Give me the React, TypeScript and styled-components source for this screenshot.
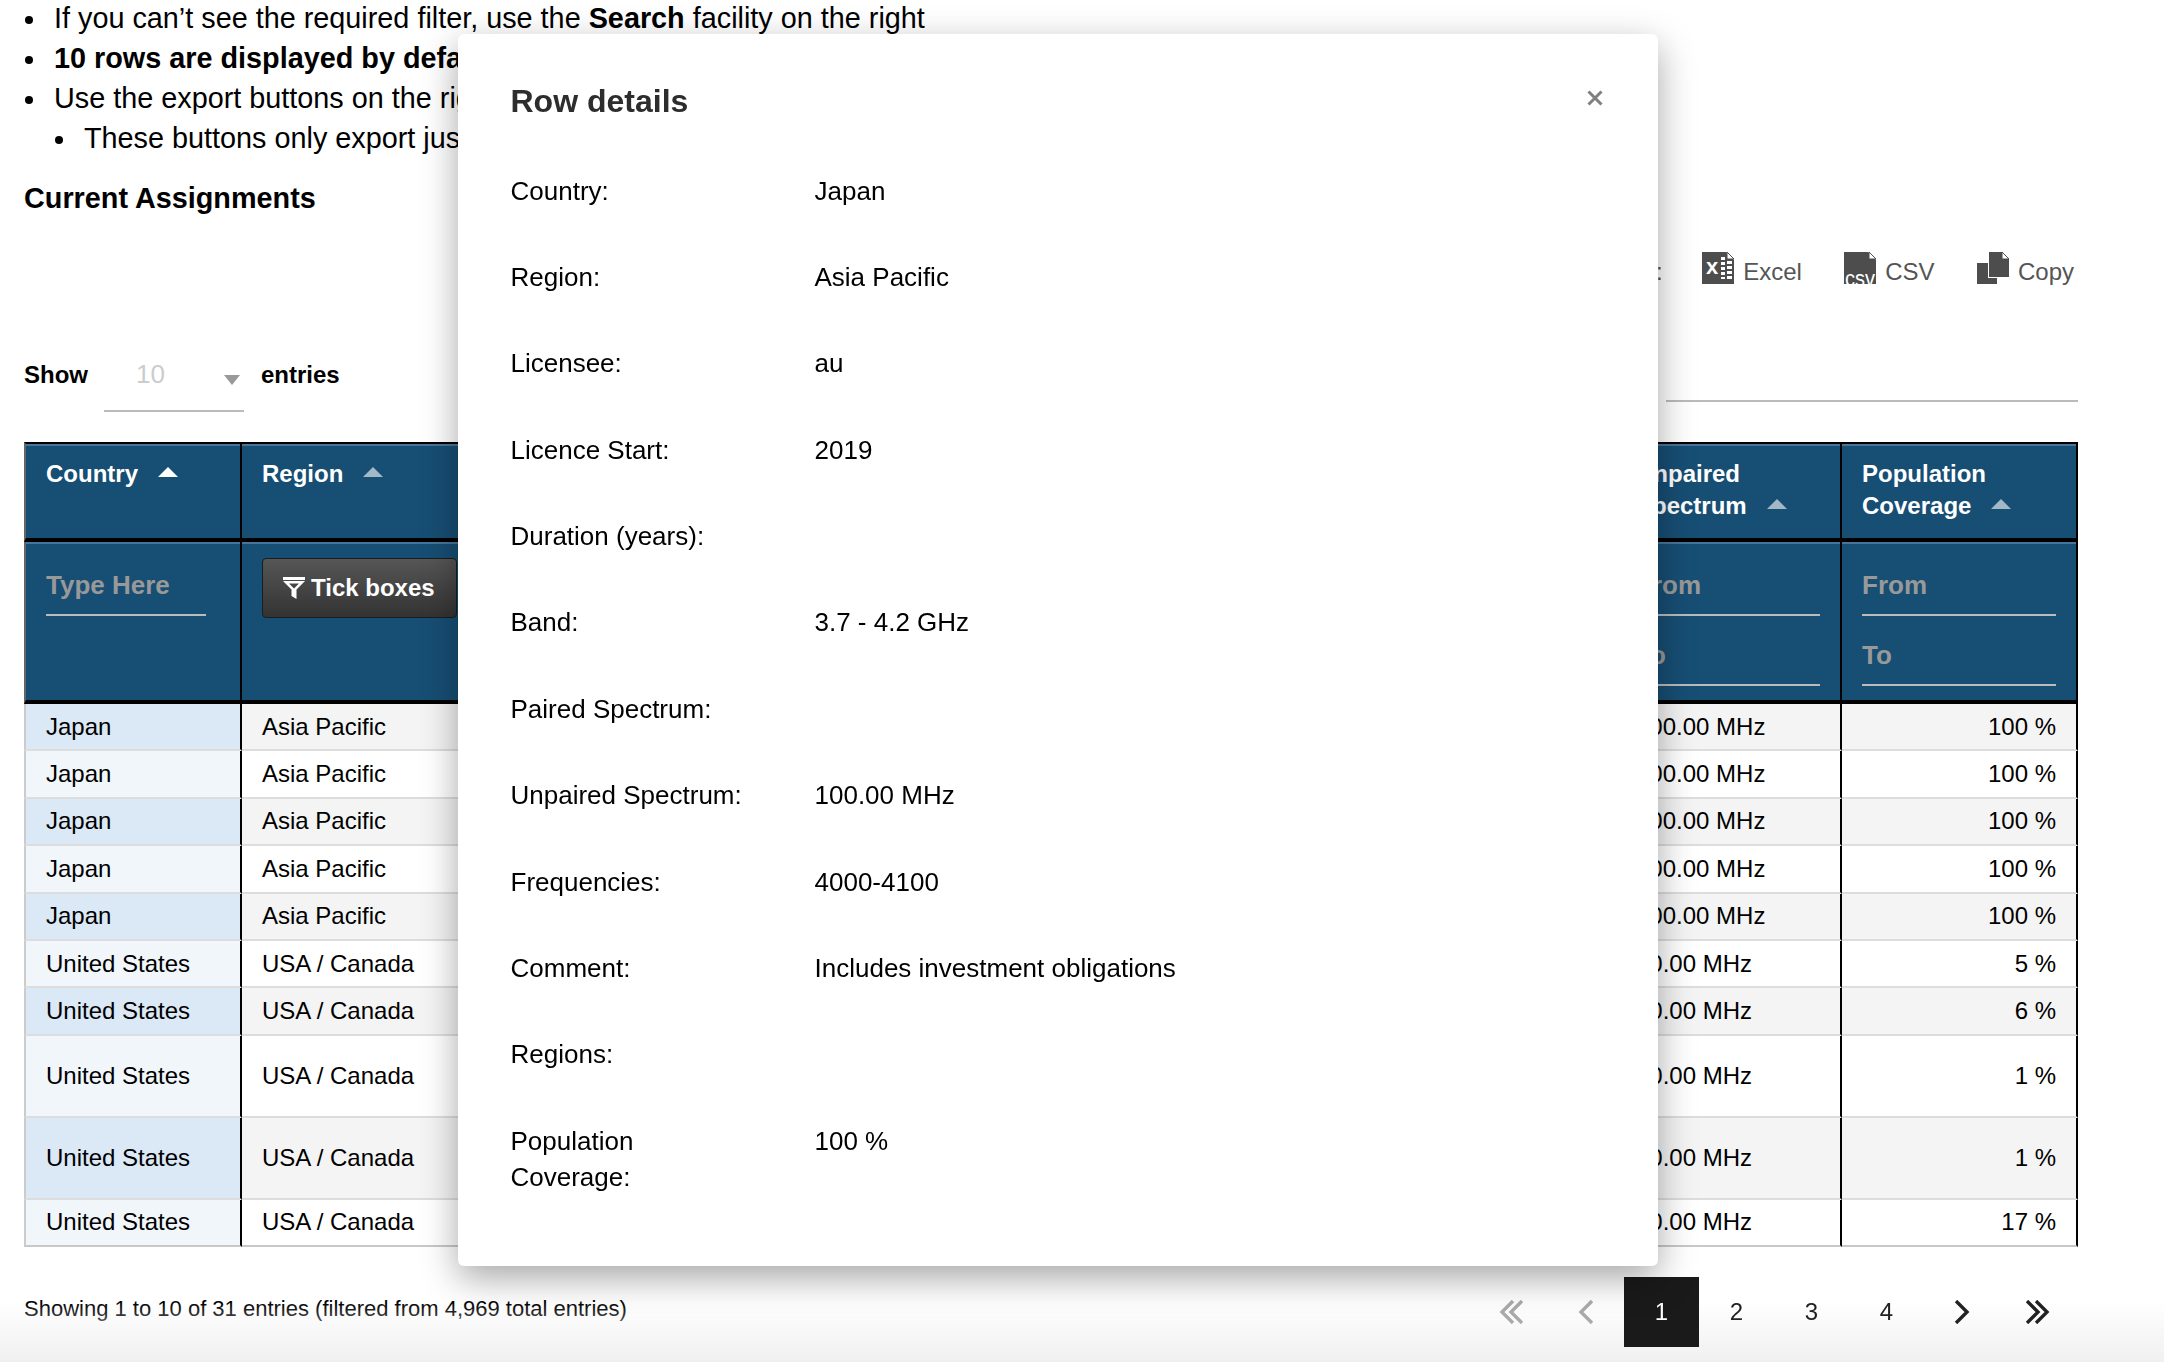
import React from "react";
import styled, { createGlobalStyle } from "styled-components";

const GlobalStyle = createGlobalStyle`
  * { box-sizing: border-box; }
  html, body {
    margin: 0;
    height: 1362px;
    overflow: hidden;
    background: #fff;
    color: #000;
    font-family: "Liberation Sans", Arial, sans-serif;
    font-size: 24px;
  }
`;

const rows = [
  { country: "Japan", region: "Asia Pacific", unpaired: "100.00 MHz", coverage: "100 %" },
  { country: "Japan", region: "Asia Pacific", unpaired: "100.00 MHz", coverage: "100 %" },
  { country: "Japan", region: "Asia Pacific", unpaired: "100.00 MHz", coverage: "100 %" },
  { country: "Japan", region: "Asia Pacific", unpaired: "100.00 MHz", coverage: "100 %" },
  { country: "Japan", region: "Asia Pacific", unpaired: "100.00 MHz", coverage: "100 %" },
  { country: "United States", region: "USA / Canada", unpaired: "10.00 MHz", coverage: "5 %" },
  { country: "United States", region: "USA / Canada", unpaired: "10.00 MHz", coverage: "6 %" },
  { country: "United States", region: "USA / Canada", unpaired: "10.00 MHz", coverage: "1 %", tall: true },
  { country: "United States", region: "USA / Canada", unpaired: "10.00 MHz", coverage: "1 %", tall: true },
  { country: "United States", region: "USA / Canada", unpaired: "10.00 MHz", coverage: "17 %" },
];

const hiddenColumns = ["Licensee", "Licence Start", "Duration (years)", "Band", "Paired Spectrum"];

const details = [
  ["Country:", "Japan"],
  ["Region:", "Asia Pacific"],
  ["Licensee:", "au"],
  ["Licence Start:", "2019"],
  ["Duration (years):", ""],
  ["Band:", "3.7 - 4.2 GHz"],
  ["Paired Spectrum:", ""],
  ["Unpaired Spectrum:", "100.00 MHz"],
  ["Frequencies:", "4000-4100"],
  ["Comment:", "Includes investment obligations"],
  ["Regions:", ""],
  ["Population Coverage:", "100 %"],
];

function ExcelIcon() {
  return (
    <svg width="32" height="32" viewBox="0 0 32 32">
      <path d="M0 0H24L32 8V32H0Z" fill="#4d4d4d" />
      <path d="M25 0L32 7H25Z" fill="#fff" stroke="#4d4d4d" strokeWidth="1" />
      <text x="4" y="22" fontSize="22" fontWeight="700" fill="#fff" fontFamily="Liberation Sans">x</text>
      <path d="M19 5h4v3h-4zM25 9h5v3h-5zM19 10h4v3h-4zM25 14h5v3h-5zM19 15h4v3h-4zM25 19h5v3h-5zM19 20h4v3h-4zM25 24h5v3h-5zM19 25h4v2h-4z" fill="#fff" />
    </svg>
  );
}

function CsvIcon() {
  return (
    <svg width="32" height="32" viewBox="0 0 32 32">
      <path d="M0 0H24L32 8V32H0Z" fill="#4d4d4d" />
      <path d="M25 0L32 7H25Z" fill="#fff" stroke="#4d4d4d" strokeWidth="1" />
      <text x="1" y="34" fontSize="22" fill="#fff" fontFamily="Liberation Sans" textLength="30" lengthAdjust="spacingAndGlyphs">csv</text>
    </svg>
  );
}

function CopyIcon() {
  return (
    <svg width="32" height="32" viewBox="0 0 32 32">
      <path d="M0 11H11V26H20V32H0Z" fill="#4d4d4d" />
      <path d="M12 0H25L32 7V25H12Z" fill="#4d4d4d" />
      <path d="M25 0L32 7H25Z" fill="#fff" stroke="#4d4d4d" strokeWidth="1" />
    </svg>
  );
}

function FunnelIcon() {
  return (
    <svg width="22" height="22" viewBox="0 0 22 22">
      <path d="M0 0H22V3H0Z" fill="#fff" />
      <path fillRule="evenodd" d="M0 4H22L13.5 12.5V22L8.5 19V12.5ZM6 6.5L11 11.5L16 6.5Z" fill="#fff" />
    </svg>
  );
}

function Chevrons({ count, dir, muted }: { count: number; dir: "left" | "right"; muted?: boolean }) {
  const points = dir === "left" ? "14,1 3,12 14,23" : "3,1 14,12 3,23";
  return (
    <svg width={count === 2 ? 26 : 17} height="24" viewBox={count === 2 ? "0 0 26 24" : "0 0 17 24"} fill="none">
      <polyline points={points} stroke={muted ? "#aaa" : "#222"} strokeWidth="3.4" />
      {count === 2 && (
        <polyline points={points} transform="translate(9 0)" stroke={muted ? "#aaa" : "#222"} strokeWidth="3.4" />
      )}
    </svg>
  );
}

export default function App() {
  return (
    <Page>
      <GlobalStyle />
      <Notes>
        <li>If you can’t see the required filter, use the <b>Search</b> facility on the right</li>
        <li><b>10 rows are displayed by default</b></li>
        <li>
          Use the export buttons on the right
          <ul>
            <li>These buttons only export just the rows shown</li>
          </ul>
        </li>
      </Notes>
      <SectionTitle>Current Assignments</SectionTitle>

      <ExportBar>
        <ExportLabel>Export:</ExportLabel>
        <ExportButton><ExcelIcon />Excel</ExportButton>
        <ExportButton><CsvIcon />CSV</ExportButton>
        <ExportButton><CopyIcon />Copy</ExportButton>
      </ExportBar>

      <TableControls>
        <LengthControl>
          Show
          <LengthSelect>
            10
            <SelectArrow />
          </LengthSelect>
          entries
        </LengthControl>
        <SearchBox />
      </TableControls>

      <Table>
        <colgroup>
          <col style={{ width: 218 }} />
          <col style={{ width: 304 }} />
          {hiddenColumns.map((name) => (
            <col key={name} style={{ width: 214 }} />
          ))}
          <col style={{ width: 226 }} />
          <col style={{ width: 236 }} />
        </colgroup>
        <thead>
          <tr>
            <HeadCell>Country<SortArrow $active /></HeadCell>
            <HeadCell>Region<SortArrow /></HeadCell>
            {hiddenColumns.map((name) => (
              <HeadCell key={name}>{name}<SortArrow /></HeadCell>
            ))}
            <HeadCell>Unpaired Spectrum<SortArrow /></HeadCell>
            <HeadCell>Population Coverage<SortArrow /></HeadCell>
          </tr>
          <tr>
            <FilterCell><FilterInput placeholder="Type Here" $narrow /></FilterCell>
            <FilterCell>
              <TickButton><FunnelIcon />Tick boxes</TickButton>
            </FilterCell>
            {hiddenColumns.map((name) => (
              <FilterCell key={name} />
            ))}
            <FilterCell>
              <FilterInput placeholder="From" />
              <FilterInput placeholder="To" />
            </FilterCell>
            <FilterCell>
              <FilterInput placeholder="From" />
              <FilterInput placeholder="To" />
            </FilterCell>
          </tr>
        </thead>
        <tbody>
          {rows.map((row, index) => (
            <BodyRow key={index} $tall={row.tall}>
              <CountryCell $odd={index % 2 === 0}>{row.country}</CountryCell>
              <BodyCell $odd={index % 2 === 0}>{row.region}</BodyCell>
              {hiddenColumns.map((name) => (
                <BodyCell key={name} $odd={index % 2 === 0} />
              ))}
              <BodyCell $odd={index % 2 === 0}>{row.unpaired}</BodyCell>
              <CoverageCell $odd={index % 2 === 0}>{row.coverage}</CoverageCell>
            </BodyRow>
          ))}
        </tbody>
      </Table>

      <TableFooter>
        <Info>Showing 1 to 10 of 31 entries (filtered from 4,969 total entries)</Info>
        <Pager>
          <PageCell><Chevrons count={2} dir="left" muted /></PageCell>
          <PageCell><Chevrons count={1} dir="left" muted /></PageCell>
          <PageCell $current>1</PageCell>
          <PageCell>2</PageCell>
          <PageCell>3</PageCell>
          <PageCell>4</PageCell>
          <PageCell><Chevrons count={1} dir="right" /></PageCell>
          <PageCell><Chevrons count={2} dir="right" /></PageCell>
        </Pager>
      </TableFooter>

      <BottomFade />

      <Modal>
        <ModalTitle>Row details</ModalTitle>
        <CloseButton>
          <svg width="16" height="16" viewBox="0 0 16 16">
            <path d="M1.5 1.5L14.5 14.5M14.5 1.5L1.5 14.5" stroke="#808080" strokeWidth="3" />
          </svg>
        </CloseButton>
        {details.map(([label, value]) => (
          <DetailRow key={label}>
            <span>{label}</span>
            <span>{value}</span>
          </DetailRow>
        ))}
      </Modal>
    </Page>
  );
}

const Page = styled.div`
  padding: 0 86px 0 24px;
  height: 1362px;
  overflow: hidden;
`;

const Notes = styled.ul`
  margin: -2px 0 0;
  padding: 0 0 0 30px;
  list-style: none;
  font-size: 28.8px;
  line-height: 40px;

  li {
    position: relative;
  }

  li::before {
    content: "";
    position: absolute;
    left: -29px;
    top: 18px;
    width: 8px;
    height: 8px;
    border-radius: 50%;
    background: #000;
  }

  ul {
    margin: 0;
    padding-left: 30px;
    list-style: none;
  }
`;

const SectionTitle = styled.div`
  margin-top: 20px;
  font-size: 28.8px;
  line-height: 40px;
  font-weight: 700;
`;

const ExportBar = styled.div`
  display: flex;
  justify-content: flex-end;
  align-items: flex-start;
  margin-top: 34px;
  padding-right: 4px;
  height: 32px;
  color: #555;
`;

const ExportLabel = styled.span`
  margin-right: -3px;
  line-height: 40px;
`;

const ExportButton = styled.span`
  display: flex;
  align-items: flex-start;
  gap: 9px;
  margin-left: 42.4px;
  line-height: 40px;
`;

const TableControls = styled.div`
  display: flex;
  justify-content: space-between;
  align-items: flex-start;
  margin-top: 66px;
  margin-bottom: 30px;
`;

const LengthControl = styled.div`
  display: flex;
  font-weight: 700;
  line-height: 50px;
`;

const LengthSelect = styled.div`
  position: relative;
  width: 140px;
  height: 62px;
  margin: 0 17px 0 16px;
  padding-left: 32px;
  border-bottom: 2px solid #bbb;
  color: #ccc;
  font-size: 26px;
  font-weight: 400;
  line-height: 48px;
`;

const SelectArrow = styled.span`
  position: absolute;
  right: 4px;
  top: 25px;
  border-left: 8px solid transparent;
  border-right: 8px solid transparent;
  border-top: 10px solid #999;
`;

const SearchBox = styled.div`
  width: 412px;
  height: 52px;
  border-bottom: 2px solid #bbb;
`;

const Table = styled.table`
  width: 2054px;
  table-layout: fixed;
  border-collapse: separate;
  border-spacing: 0;
`;

const HeadCell = styled.th`
  height: 100px;
  padding: 14px 20px 0;
  border-top: 2px solid #000;
  border-right: 2px solid #000;
  border-bottom: 4px solid #000;
  box-shadow: inset 0 2px 0 #47759a;
  background: #174e74;
  color: #fff;
  font-size: 24px;
  font-weight: 700;
  line-height: 32px;
  text-align: left;
  vertical-align: top;

  &:first-child {
    border-left: 2px solid #666;
  }
`;

const SortArrow = styled.span<{ $active?: boolean }>`
  display: inline-block;
  margin-left: 20px;
  vertical-align: 5px;
  border-left: 10px solid transparent;
  border-right: 10px solid transparent;
  border-bottom: 10px solid ${(p) => (p.$active ? "#fff" : "#a3b8c7")};
`;

const FilterCell = styled.th`
  height: 162px;
  padding: 16px 20px 0;
  border-right: 2px solid #000;
  border-bottom: 4px solid #000;
  box-shadow: inset 0 2px 0 #47759a;
  background: #174e74;
  vertical-align: top;

  &:first-child {
    border-left: 2px solid #666;
  }
`;

const FilterInput = styled.input<{ $narrow?: boolean }>`
  display: block;
  width: ${(p) => (p.$narrow ? "160px" : "100%")};
  height: 46px;
  margin-top: 12px;
  padding: 0 0 14px;
  border: 0;
  border-bottom: 2px solid #bbb;
  background: transparent;
  color: #fff;
  font-family: inherit;
  font-size: 26px;
  font-weight: 700;
  line-height: 30px;
  outline: none;

  & + & {
    margin-top: 24px;
  }

  &::placeholder {
    color: #999;
    opacity: 1;
  }
`;

const TickButton = styled.button`
  display: flex;
  align-items: center;
  gap: 6px;
  width: 195px;
  height: 60px;
  padding: 0 0 0 20px;
  border: 1px solid #1c1c1c;
  border-radius: 4px;
  background: linear-gradient(#565656, #333);
  color: #fff;
  font-family: inherit;
  font-size: 24px;
  font-weight: 700;
`;

const BodyRow = styled.tr<{ $tall?: boolean }>`
  height: ${(p) => (p.$tall ? "82px" : "47.4px")};
`;

const BodyCell = styled.td<{ $odd?: boolean }>`
  padding: 0 20px;
  border-right: 2px solid #000;
  border-bottom: 2px solid #ddd;
  background: ${(p) => (p.$odd ? "#f4f4f4" : "#fff")};
  white-space: nowrap;

  tr:last-child & {
    border-bottom-color: #c8c8c8;
  }
`;

const CountryCell = styled(BodyCell)`
  border-left: 2px solid #ccc;
  background: ${(p) => (p.$odd ? "#dbe8f5" : "#f1f6fb")};
`;

const CoverageCell = styled(BodyCell)`
  text-align: right;
`;

const TableFooter = styled.div`
  display: flex;
  justify-content: space-between;
  align-items: flex-start;
  margin-top: 30px;
`;

const Info = styled.div`
  padding-top: 14px;
  font-size: 22px;
  line-height: 36px;
`;

const Pager = styled.div`
  position: relative;
  z-index: 1;
  display: flex;
  margin-right: 4px;
`;

const PageCell = styled.div<{ $current?: boolean }>`
  display: flex;
  align-items: center;
  justify-content: center;
  width: 75px;
  height: 70px;
  background: ${(p) => (p.$current ? "#1a1a1a" : "transparent")};
  color: ${(p) => (p.$current ? "#fff" : "#222")};
`;

const BottomFade = styled.div`
  position: fixed;
  left: 0;
  right: 0;
  bottom: 0;
  height: 60px;
  background: linear-gradient(rgba(240, 240, 240, 0), #f0f0f0);
  pointer-events: none;
`;

const Modal = styled.div`
  position: fixed;
  z-index: 2;
  left: 458px;
  top: 34px;
  width: 1200px;
  height: 1232px;
  padding: 47px 52.5px 0;
  border-radius: 6px;
  background: #fff;
  box-shadow: 0 12px 36px rgba(0, 0, 0, 0.35);
  font-size: 26px;
`;

const ModalTitle = styled.div`
  margin-bottom: 51.5px;
  color: #2d2d2d;
  font-size: 32px;
  font-weight: 700;
  line-height: 40px;
`;

const CloseButton = styled.div`
  position: absolute;
  top: 56px;
  right: 55px;
  display: flex;
`;

const DetailRow = styled.div`
  display: grid;
  grid-template-columns: 240px 1fr;
  column-gap: 64px;
  margin-bottom: 50.4px;
  line-height: 36px;
`;
